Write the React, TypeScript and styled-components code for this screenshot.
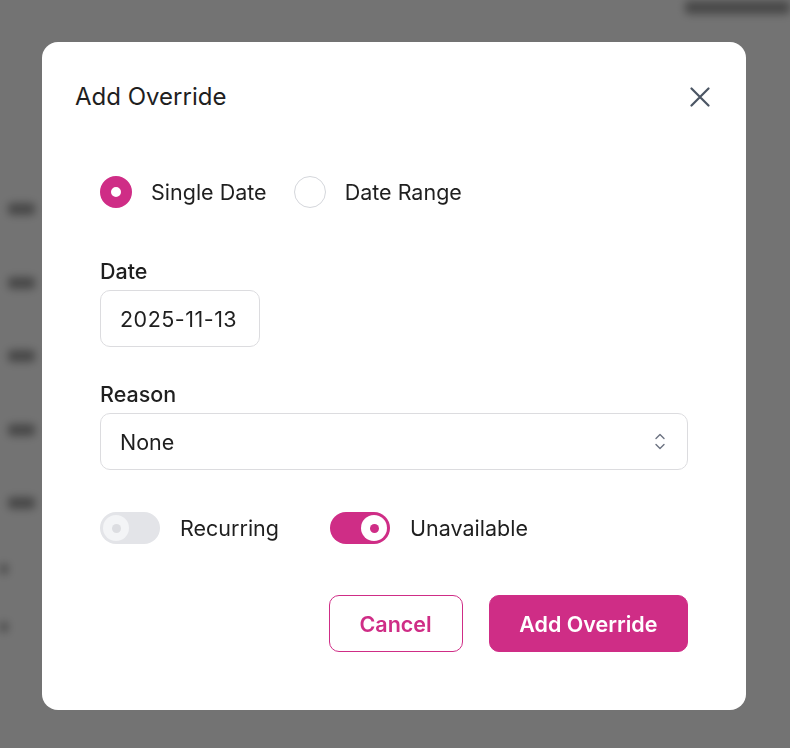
import React from "react";
import styled, { createGlobalStyle } from "styled-components";

const PINK = "#cf2d86";

const GlobalStyle = createGlobalStyle`
  html, body {
    margin: 0;
    padding: 0;
    background: #ffffff;
    font-family: Inter, "Noto Sans", "Liberation Sans", sans-serif;
  }
  * { box-sizing: border-box; }
`;

// — blurred page behind the dialog —
const Page = styled.div`
  width: 790px;
  height: 748px;
  overflow: hidden;
  display: flex;
  flex-direction: column;
  filter: blur(4px);
`;

const TopBar = styled.div`
  display: flex;
  justify-content: flex-end;
  padding: 1px 0 0 0;
  height: 203px;
`;

const Blob = styled.div<{ w: number; h?: number }>`
  width: ${({ w }) => `${w}px`};
  height: ${({ h }) => `${h ?? 12}px`};
  border-radius: 4px;
  background: #2a2a2a;
  opacity: 0.45;
`;

const SideList = styled.div`
  display: flex;
  flex-direction: column;
  gap: 61.5px;
  padding: 0 0 0 8px;
`;

const SideSmall = styled.div`
  display: flex;
  flex-direction: column;
  gap: 48px;
  padding: 55px 0 0 0;
`;

const Overlay = styled.div`
  position: fixed;
  inset: 0;
  background: rgba(0, 0, 0, 0.55);
  display: flex;
  align-items: center;
  justify-content: center;
`;

// — dialog —
const Dialog = styled.div`
  width: 704px;
  background: #fff;
  border-radius: 16px;
  display: flex;
  flex-direction: column;
  margin: 4px 0 0 -2px;
`;

const Header = styled.div`
  display: flex;
  align-items: center;
  justify-content: space-between;
  padding: 40px 36px 0 33px;
`;

const Title = styled.h2`
  margin: 0;
  font-size: 24px;
  line-height: 30px;
  font-weight: 400;
  color: #1f1f1f;
`;

const CloseButton = styled.button`
  border: 0;
  background: none;
  padding: 0;
  width: 20px;
  height: 20px;
  display: flex;
  cursor: pointer;
`;

const Body = styled.div`
  display: flex;
  flex-direction: column;
  padding: 64px 58px 58px 58px;
`;

const RadioRow = styled.div`
  display: flex;
  align-items: center;
  gap: 27px;
  height: 32px;
`;

const RadioOption = styled.label`
  display: flex;
  align-items: center;
  gap: 19px;
  font-size: 21.5px;
  color: #1f1f1f;
  cursor: pointer;
`;

const RadioDot = styled.span<{ checked?: boolean }>`
  width: 32px;
  height: 32px;
  border-radius: 50%;
  flex-shrink: 0;
  background: #fff;
  border: ${({ checked }) => (checked ? `11px solid ${PINK}` : "1px solid #d4d6db")};
`;

const Field = styled.div<{ top: number }>`
  display: flex;
  flex-direction: column;
  gap: 5px;
  margin-top: ${({ top }) => `${top}px`};
`;

const Label = styled.div`
  font-size: 21.5px;
  line-height: 28px;
  font-weight: 500;
  color: #1f1f1f;
`;

const Box = styled.div<{ full?: boolean }>`
  height: 57px;
  display: flex;
  align-items: center;
  justify-content: space-between;
  align-self: ${({ full }) => (full ? "stretch" : "flex-start")};
  padding: 0 22px 0 19px;
  border: 1px solid #dcdcdf;
  border-radius: 10px;
  font-size: 21.5px;
  letter-spacing: ${({ full }) => (full ? "0" : "0.5px")};
  color: #1f1f1f;
  background: #fff;
`;

const ToggleRow = styled.div`
  display: flex;
  align-items: center;
  gap: 51px;
  margin-top: 42px;
`;

const ToggleItem = styled.label`
  display: flex;
  align-items: center;
  gap: 20px;
  font-size: 21.5px;
  color: #1f1f1f;
`;

const Track = styled.span<{ on?: boolean }>`
  width: 60px;
  height: 32px;
  border-radius: 16px;
  background: ${({ on }) => (on ? PINK : "#e3e4e8")};
  display: flex;
  align-items: center;
  justify-content: ${({ on }) => (on ? "flex-end" : "flex-start")};
  padding: 0 3px;
`;

const Knob = styled.span<{ on?: boolean }>`
  width: 26px;
  height: 26px;
  border-radius: 50%;
  background: ${({ on }) => (on ? "#fff" : "#f3f4f6")};
  display: flex;
  align-items: center;
  justify-content: center;
  &::after {
    content: "";
    width: 9px;
    height: 9px;
    border-radius: 50%;
    background: ${({ on }) => (on ? PINK : "#dcdde1")};
  }
`;

const Footer = styled.div`
  display: flex;
  justify-content: flex-end;
  gap: 26px;
  margin-top: 51px;
`;

const Button = styled.button<{ primary?: boolean }>`
  height: 57px;
  padding: 0 ${({ primary }) => (primary ? "29.5px" : "30px")};
  border-radius: 10px;
  font-family: inherit;
  font-size: 21.5px;
  font-weight: 600;
  cursor: pointer;
  border: 1px solid ${PINK};
  background: ${({ primary }) => (primary ? PINK : "#fff")};
  color: ${({ primary }) => (primary ? "#fff" : PINK)};
`;

const CloseIcon = () => (
  <svg width="20" height="20" viewBox="0 0 20 20" fill="none">
    <path d="M1.5 1.5L18.5 18.5M18.5 1.5L1.5 18.5" stroke="#4b5563" strokeWidth="2.2" strokeLinecap="round" />
  </svg>
);

const UpDownIcon = () => (
  <svg width="10" height="17" viewBox="0 0 10 17" fill="none">
    <path d="M1 5.5L5 1.5L9 5.5M1 11.5L5 15.5L9 11.5" stroke="#6b7280" strokeWidth="1.4" strokeLinecap="round" strokeLinejoin="round" />
  </svg>
);

const App: React.FC = () => {
  return (
    <>
      <GlobalStyle />
      <Page>
        <TopBar>
          <Blob w={105} h={13} />
        </TopBar>
        <SideList>
          {[0, 1, 2, 3, 4].map((i) => (
            <Blob key={i} w={27} />
          ))}
        </SideList>
        <SideSmall>
          <Blob w={8} h={10} />
          <Blob w={8} h={10} />
        </SideSmall>
      </Page>

      <Overlay>
        <Dialog>
          <Header>
            <Title>Add Override</Title>
            <CloseButton aria-label="Close">
              <CloseIcon />
            </CloseButton>
          </Header>

          <Body>
            <RadioRow>
              <RadioOption>
                <RadioDot checked />
                Single Date
              </RadioOption>
              <RadioOption>
                <RadioDot />
                Date Range
              </RadioOption>
            </RadioRow>

            <Field top={49}>
              <Label>Date</Label>
              <Box>2025-11-13</Box>
            </Field>

            <Field top={33}>
              <Label>Reason</Label>
              <Box full>
                None
                <UpDownIcon />
              </Box>
            </Field>

            <ToggleRow>
              <ToggleItem>
                <Track>
                  <Knob />
                </Track>
                Recurring
              </ToggleItem>
              <ToggleItem>
                <Track on>
                  <Knob on />
                </Track>
                Unavailable
              </ToggleItem>
            </ToggleRow>

            <Footer>
              <Button>Cancel</Button>
              <Button primary>Add Override</Button>
            </Footer>
          </Body>
        </Dialog>
      </Overlay>
    </>
  );
};

export default App;
